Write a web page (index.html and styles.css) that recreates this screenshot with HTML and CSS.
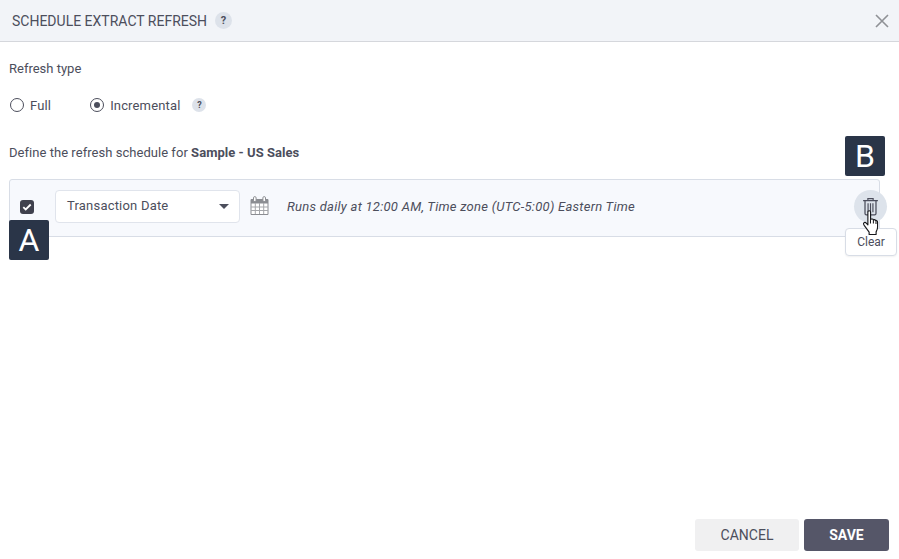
FILE: index.html
```html
<!DOCTYPE html>
<html lang="en">
<head>
<meta charset="utf-8">
<title>Schedule Extract Refresh</title>
<link rel="stylesheet" href="styles.css">
</head>
<body>
<div class="dialog">
  <header class="head">
    <h1 class="title">SCHEDULE EXTRACT REFRESH</h1>
    <span class="help help-lg">?</span>
    <svg class="close" width="16" height="16" viewBox="0 0 16 16"><path d="M2 2l12 12M14 2L2 14" stroke="#8f9196" stroke-width="1.6" fill="none"/></svg>
  </header>
  <main class="body">
    <p class="label">Refresh type</p>
    <div class="radios">
      <label class="radio"><span class="dot"></span>Full</label>
      <label class="radio on"><span class="dot"></span>Incremental</label>
      <span class="help help-sm">?</span>
    </div>
    <p class="define">Define the refresh schedule for <b>Sample - US Sales</b></p>
    <section class="row">
      <span class="check"><svg width="10" height="8" viewBox="0 0 10 8"><path d="M1.3 4.2l2.4 2.3L8.7 1.5" stroke="#fff" stroke-width="1.8" fill="none"/></svg></span>
      <div class="select"><span>Transaction Date</span><i class="caret"></i></div>
      <svg class="cal" width="19" height="19" viewBox="0 0 19 19"><path d="M1 3.500h17v15H1z" fill="#fff" stroke="#8b8d92"/><path d="M1 3.500h17v4H1z" fill="#8b8d92"/><path d="M1 11h17M1 14.500h17M5.300 7v11M9.500 7v11M13.700 7v11" stroke="#a5a7ab" fill="none"/><rect x="3.500" y=".6" width="2.600" height="5" rx="1.300" fill="#fff" stroke="#8b8d92"/><rect x="12.900" y=".6" width="2.600" height="5" rx="1.300" fill="#fff" stroke="#8b8d92"/></svg>
      <em class="desc">Runs daily at 12:00 AM, Time zone (UTC-5:00) Eastern Time</em>
      <span class="trash">
        <svg width="17" height="19" viewBox="0 0 16 18"><path d="M1 3.500h14M5.500 3.500V1.500h5v2" stroke="#4c4e5c" stroke-width="1.100" fill="none"/><path d="M2.800 3.500v12.200a1.300 1.300 0 0 0 1.300 1.300h7.800a1.300 1.300 0 0 0 1.300-1.300V3.500" stroke="#4c4e5c" stroke-width="1.200" fill="none"/><path d="M5.700 6v8.500M8 6v8.500M10.300 6v8.500" stroke="#4c4e5c" stroke-width="1.100" fill="none"/></svg>
      </span>
      <span class="tip">Clear</span>
      <svg class="hand" width="18" height="25" viewBox="0 0 17 24"><path d="M5.500 2a1.300 1.300 0 0 1 2.600 0v7l1-.3c.8-.2 1.500.1 1.800.7.800-.3 1.600 0 1.900.7.900-.3 1.900.2 2 1.200v5.200c0 2-.6 3-1.400 4.500v2.500H6.700v-2.200L2.500 15.500c-1.200-1.500-1.500-2.500-.8-3.200.8-.7 1.800-.3 2.700.7l1.100 1.200z" fill="#fff" stroke="#16171b" stroke-width="1.100" stroke-linejoin="round"/><path d="M8 9v4M10.800 9.500v3.500M13.300 10.500v3" stroke="#16171b" fill="none"/></svg>
      <span class="badge badge-a">A</span>
      <span class="badge badge-b">B</span>
    </section>
  </main>
  <footer class="foot">
    <button class="btn cancel">CANCEL</button>
    <button class="btn save">SAVE</button>
  </footer>
</div>
</body>
</html>
```
FILE: styles.css
```css
* { box-sizing: border-box; }
html, body { margin: 0; height: 100%; }
body { font-family: Roboto, "Liberation Sans", sans-serif; color: #4c4e5c; background: #fff; font-size: 13px; }
.dialog { width: 899px; height: 559px; display: flex; flex-direction: column; overflow: hidden; }
.head { height: 42px; flex: none; background: #f2f4f8; border-bottom: 1px solid #d5d7dc; display: flex; align-items: center; padding: 0 9px 0 12px; }
.title { margin: 0; font-size: 14px; font-weight: 400; color: #4c4e5c; }
.help { display: inline-flex; align-items: center; justify-content: center; border-radius: 50%; background: #dde2ea; font-weight: 700; color: #4c4e5c; }
.help-lg { width: 17px; height: 17px; margin-left: 8px; font-size: 11px; }
.help-sm { width: 14px; height: 14px; margin-left: 12px; font-size: 9px; }
.close { margin-left: auto; }
.body { flex: 1; padding: 19px 19px 0 9px; }
.label { margin: 0; height: 15px; line-height: 15px; }
.radios { display: flex; align-items: center; margin-top: 20px; height: 18px; }
.radio { display: flex; align-items: center; gap: 6px; margin-right: 38px; letter-spacing: .15px; }
.radio.on { margin-right: 0; }
.dot { width: 14px; height: 14px; border: 1px solid #4c4e5c; border-radius: 50%; background: #fff; margin-left: 1px; display: flex; align-items: center; justify-content: center; }
.radio.on .dot::after { content: ""; width: 6px; height: 6px; border-radius: 50%; background: #4c4e5c; }
.define { margin: 31px 0 0; height: 15px; line-height: 15px; letter-spacing: .04px; }
.define b { font-weight: 700; }
.row { position: relative; margin-top: 19px; height: 58px; border: 1px solid #d8dde6; border-radius: 3px; background: #f7f9fd; display: flex; align-items: center; padding-left: 10px; }
.check { width: 14px; height: 14px; margin-top: -2px; margin-right: 1px; border-radius: 3px; background: #3f414d; display: flex; align-items: center; justify-content: center; }
.select { width: 185px; height: 33px; margin-left: 20px; margin-top: -3px; padding: 0 10px 2px 11px; background: #fff; border: 1px solid #e0e4ec; border-radius: 4px; display: flex; align-items: center; justify-content: space-between; letter-spacing: .2px; }
.caret { width: 0; height: 0; margin-top: 2px; border-left: 5px solid transparent; border-right: 5px solid transparent; border-top: 5px solid #4c4e5c; }
.cal { margin-left: 10px; margin-top: -5px; }
.desc { margin-left: 18px; margin-top: -4px; font-style: italic; letter-spacing: .26px; }
.trash { position: absolute; right: -8px; top: 10px; width: 33px; height: 33px; border-radius: 50%; background: #dde3eb; display: flex; align-items: center; justify-content: center; }
.hand { position: absolute; left: 852px; top: 30px; }
.tip { position: absolute; left: 835px; top: 48px; width: 52px; height: 28px; background: #fff; border: 1px solid #d8dde6; border-radius: 4px; display: flex; align-items: center; justify-content: center; font-size: 12px; box-shadow: 0 1px 2px rgba(0,0,0,.06); }
.badge { position: absolute; width: 40px; height: 40px; background: #2a3548; color: #fff; border-radius: 2px; display: flex; align-items: center; justify-content: center; font-size: 32px; }
.badge-a { left: -1px; top: 40px; }
.badge-b { left: 835px; top: -44px; }
.foot { flex: none; display: flex; justify-content: flex-end; gap: 5px; padding: 0 10px 8px 0; }
.btn { height: 32px; border: 0; border-radius: 3px; font-family: inherit; font-size: 14px; padding: 0; }
.cancel { width: 104px; background: #f0f0f1; color: #4c4e5c; }
.save { width: 85px; background: #555668; color: #fff; font-weight: 700; }
```
